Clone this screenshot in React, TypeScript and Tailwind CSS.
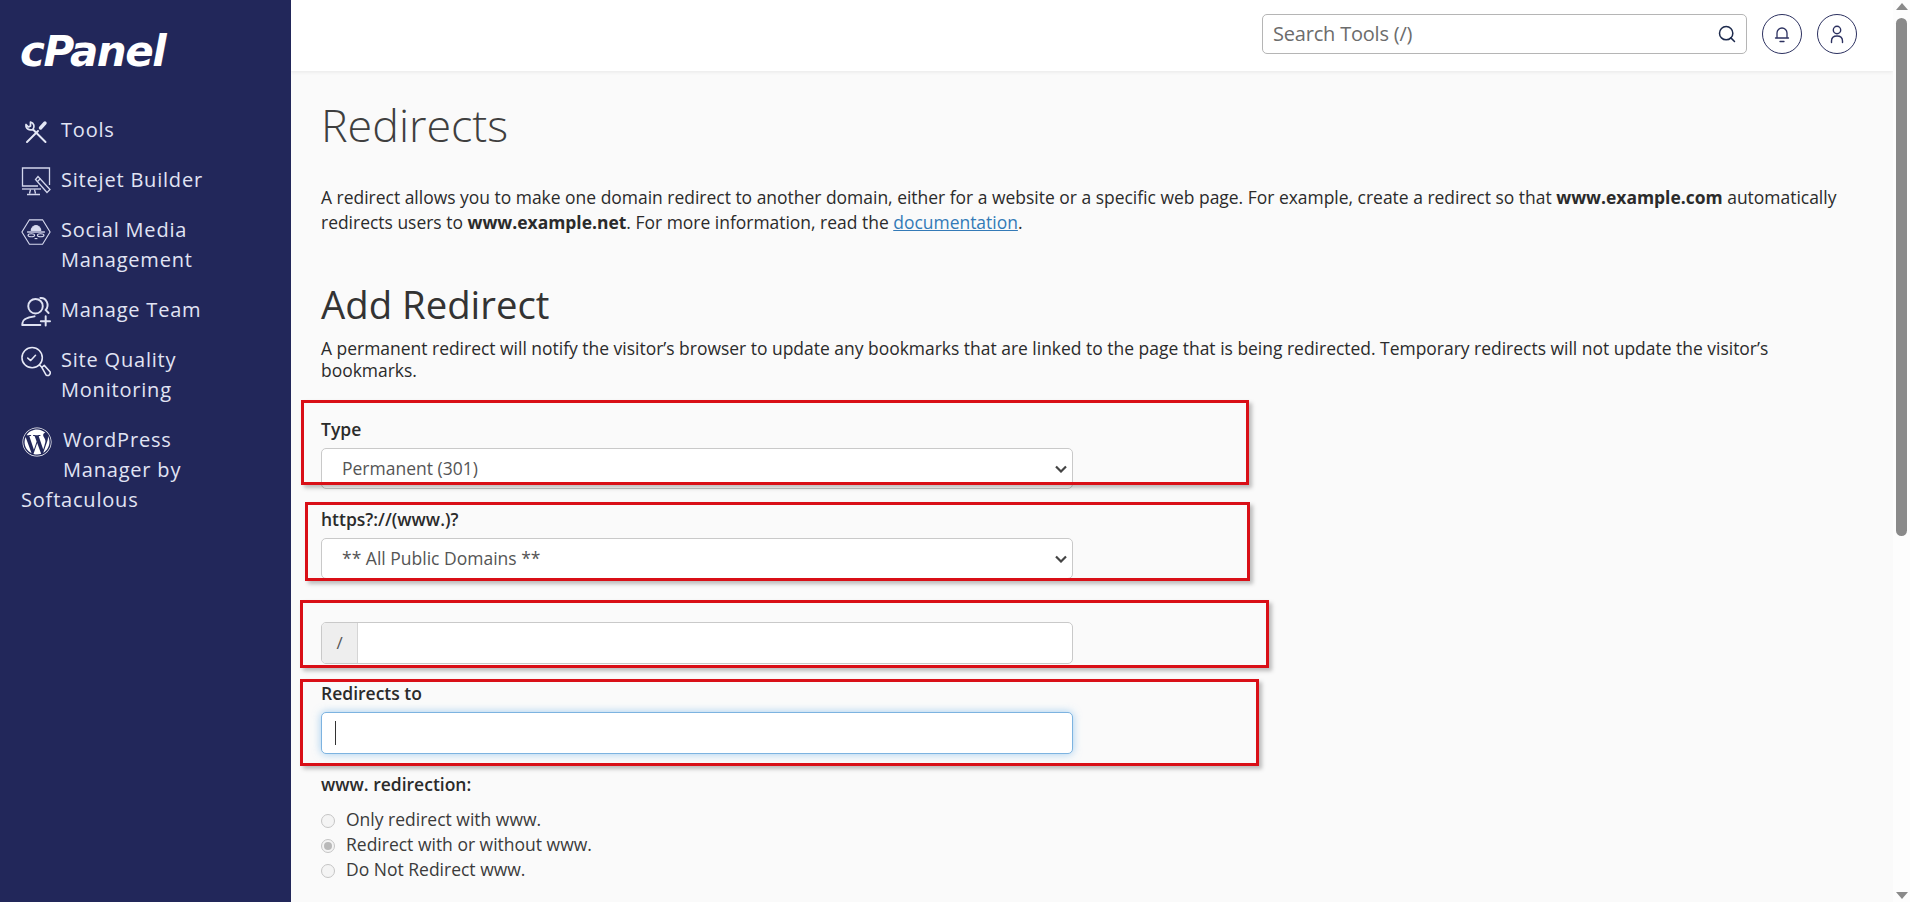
import { Search } from "lucide-react";
import { FaWordpress } from "react-icons/fa";

function ToolsIcon() {
  return (
    <svg viewBox="0 0 24 24" className="h-[24px] w-[24px]" fill="none" stroke="#e4e7f5" strokeLinecap="round">
      <path d="M3 22 14 11" strokeWidth="2" />
      <path d="M16.500 8 21 3" strokeWidth="3.400" />
      <path d="M21.500 22 9 9.500" strokeWidth="2" />
      <path d="M6.500 2v4L4.500 7 2 4.500C1.500 8.500 5 11 9 9.500 11 6.500 10 3 6.500 2z" strokeWidth="1.700" strokeLinejoin="round" />
    </svg>
  );
}

function SitejetIcon() {
  return (
    <svg viewBox="0 0 30 29" className="h-[29px] w-[30px]" fill="none" stroke="#d3d6ec" strokeWidth="1.300">
      <path d="M17 19H1.500V1h27v17" />
      <path d="M1 22h19" />
      <path d="M9.500 22.500l-1 4M13.500 22.500l1 4M6 27.500h13" />
      <path d="M17 9.500l12 13-3 3L14.500 12.500z" fill="#22275a" />
      <path d="M16.500 14.500l3-3" />
    </svg>
  );
}

function SocialIcon() {
  return (
    <svg viewBox="0 0 32 28" className="h-[28px] w-[32px]" fill="none" stroke="#d6d9ee" strokeWidth="1.200">
      <path d="M9 1h14l8 13-8 13H9L1 14z" />
      <path d="M11 13c0-8 10-8 10 0" fill="#d6d9ee" />
      <path d="M6.500 14h19" strokeWidth="1.500" />
      <ellipse cx="11" cy="17.500" rx="3.500" ry="1.600" />
      <ellipse cx="21" cy="17.500" rx="3.500" ry="1.600" />
      <path d="M14.500 21h3" />
    </svg>
  );
}

function TeamIcon() {
  return (
    <svg viewBox="0 0 31 31" className="h-[31px] w-[31px]" fill="none" stroke="#dfe2f2" strokeWidth="2" strokeLinecap="round">
      <circle cx="15" cy="10" r="7.500" />
      <path d="M20 1.500c6-.5 10 7 5.500 12.500l3 3" />
      <path d="M1.500 29.500v-2C1.500 23.500 6 21.500 14 20.500" />
      <path d="M1.500 29.500H20" />
      <path d="M25.500 20.500v9.500M20.500 25.500h9.500" />
    </svg>
  );
}

function QualityIcon() {
  return (
    <svg viewBox="0 0 31 31" className="h-[31px] w-[31px]" fill="none" stroke="#e6e8f6" strokeWidth="1.600" strokeLinecap="round" strokeLinejoin="round">
      <circle cx="11.500" cy="11.500" r="10.500" />
      <path d="M7 12l3 2.500 5-5.500" />
      <path d="M19 19l2.500 2.500" />
      <path d="M21.500 21.500l2.500-2 6 6.500c1 2.500-1.500 5-4 3.500z" />
    </svg>
  );
}

function BellIcon() {
  return (
    <svg viewBox="0 0 16 17" className="h-[17px] w-[16px]" fill="none" stroke="#2c3160" strokeWidth="1.300" strokeLinecap="round">
      <path d="M3 11.500V7a5 5 0 0 1 10 0v4.500" />
      <path d="M1.500 12h13" />
      <path d="M6 15.500h4" />
    </svg>
  );
}

function UserIcon() {
  return (
    <svg viewBox="0 0 14 19" className="h-[19px] w-[14px]" fill="none" stroke="#2c3160" strokeWidth="1.400" strokeLinecap="round">
      <circle cx="7" cy="5" r="3.700" />
      <path d="M1.500 17.500v-1.500C1.500 12.500 4 11 7 11s5.500 1.500 5.500 5v1.500" />
    </svg>
  );
}

function NavItem({ icon, children }: { icon: React.ReactNode; children: React.ReactNode }) {
  return (
    <div className="flex items-start gap-[10px] pl-[21px] text-[20px] leading-[30px] tracking-[0.8px] text-[#e1e4f4]">
      <span className="flex h-[30px] w-[30px] shrink-0 translate-y-[2px] items-center justify-center">{icon}</span>
      <span>{children}</span>
    </div>
  );
}

function Sidebar() {
  return (
    <aside className="w-[291px] shrink-0 bg-[#22275a]">
      <div className="h-[114.500px] pl-[20px] pt-[27px] font-['DejaVu_Sans',sans-serif] text-[42px] leading-[50px] font-bold italic tracking-[-1.500px] text-white">
        cPanel
      </div>
      <nav className="flex flex-col gap-[20px]">
        <NavItem icon={<ToolsIcon />}>Tools</NavItem>
        <NavItem icon={<SitejetIcon />}>Sitejet Builder</NavItem>
        <NavItem icon={<SocialIcon />}>
          Social Media
          <br />
          Management
        </NavItem>
        <NavItem icon={<TeamIcon />}>Manage Team</NavItem>
        <NavItem icon={<QualityIcon />}>
          Site Quality
          <br />
          Monitoring
        </NavItem>
        <div className="pl-[21px] text-[20px] leading-[30px] tracking-[0.8px] text-[#e1e4f4]">
          <div className="flex gap-[11px]">
            <FaWordpress className="ml-[1px] mt-[2px] h-[30px] w-[30px] shrink-0 text-white" />
            <span>
              WordPress
              <br />
              Manager by
            </span>
          </div>
          Softaculous
        </div>
      </nav>
    </aside>
  );
}

function Header() {
  return (
    <header className="flex h-[71px] shrink-0 items-start justify-end gap-[15px] bg-white pr-[36px] pt-[14px] shadow-[0_1px_4px_rgba(0,0,0,0.08)]">
      <div className="flex h-[40px] w-[485px] items-center justify-between rounded-[5px] border border-[#b5b5b5] pl-[10px] pr-[9px]">
        <span className="text-[20px] tracking-[-0.2px] text-[#6c6c6c]">Search Tools (/)</span>
        <Search className="h-[20px] w-[20px] text-[#1d2a4d]" strokeWidth={1.8} />
      </div>
      <span className="flex h-[40px] w-[40px] items-center justify-center rounded-full border border-[#2c3160]">
        <BellIcon />
      </span>
      <span className="flex h-[40px] w-[40px] items-center justify-center rounded-full border border-[#2c3160]">
        <UserIcon />
      </span>
    </header>
  );
}

function ChevronSelect({ value }: { value: string }) {
  return (
    <div className="flex h-[41px] w-[752px] items-center justify-between rounded-[5px] border border-[#c9c9c9] bg-white pl-[20px] pr-[5px] text-[#555]">
      <span className="text-[17.500px]">{value}</span>
      <svg viewBox="0 0 12 8" className="h-[8px] w-[12px]" fill="none" stroke="#444" strokeWidth="2.200">
        <path d="M1 1.500l5 5 5-5" />
      </svg>
    </div>
  );
}

function Radio({ label, checked }: { label: string; checked?: boolean }) {
  return (
    <div className="flex h-[25px] items-center gap-[11px] text-[17.500px] text-[#3b3b3b]">
      <span className="mt-[2px] flex h-[14px] w-[14px] items-center justify-center rounded-full border border-[#c5c5c5] bg-[#f4f4f4]">
        {checked && <span className="h-[8px] w-[8px] rounded-full bg-[#b9b9b9]" />}
      </span>
      {label}
    </div>
  );
}

function RedBox({ className }: { className: string }) {
  return (
    <div className={`pointer-events-none absolute border-[3px] border-[#d90f17] shadow-[3px_3px_4px_rgba(0,0,0,0.25)] ${className}`} />
  );
}

function Form() {
  return (
    <form className="w-[752px] text-[#2b2b2b]">
      <div className="relative">
        <RedBox className="left-[-20px] top-[-16px] h-[85px] w-[948px]" />
        <label className="block h-[26px] text-[17.500px] leading-[26px] font-semibold">Type</label>
        <div className="mt-[6px]">
          <ChevronSelect value="Permanent (301)" />
        </div>
      </div>
      <div className="relative mt-[17px]">
        <RedBox className="left-[-16px] top-[-4px] h-[79px] w-[945px]" />
        <label className="block h-[26px] text-[17.500px] leading-[26px] font-semibold">https?://(www.)?</label>
        <div className="mt-[6px]">
          <ChevronSelect value="** All Public Domains **" />
        </div>
      </div>
      <div className="relative mt-[43px]">
        <RedBox className="left-[-21px] top-[-22px] h-[68px] w-[969px]" />
        <div className="flex h-[42px] items-stretch overflow-hidden rounded-[5px] border border-[#c9c9c9] bg-white">
          <span className="flex w-[36px] items-center justify-center border-r border-[#d5d5d5] bg-[#eeeeee] text-[17px] text-[#555]">/</span>
        </div>
      </div>
      <div className="relative mt-[16px]">
        <RedBox className="left-[-21px] top-[-1px] h-[87px] w-[959px]" />
        <label className="block h-[26px] text-[17.500px] leading-[26px] font-semibold">Redirects to</label>
        <div className="mt-[6px] flex h-[42px] items-center rounded-[5px] border border-[#7db3e0] bg-white pl-[13px] shadow-[0_0_8px_rgba(102,175,233,0.6)]">
          <span className="h-[24px] w-px bg-[#333]" />
        </div>
      </div>
      <div className="mt-[17px] text-[17.500px] leading-[26px] font-semibold">www. redirection:</div>
      <div className="mt-[10px]">
        <Radio label="Only redirect with www." />
        <Radio label="Redirect with or without www." checked />
        <Radio label="Do Not Redirect www." />
      </div>
    </form>
  );
}

function Scrollbar() {
  return (
    <div className="flex w-[17px] shrink-0 flex-col items-center bg-[#fdfdfd] pt-[3px] pb-[3px]">
      <span className="h-0 w-0 border-x-[6px] border-b-[7px] border-x-transparent border-b-[#8a8a8a]" />
      <span className="mt-[8px] h-[518px] w-[11px] rounded-full bg-[#8a8a8a]" />
      <span className="mt-auto h-0 w-0 border-x-[6px] border-t-[7px] border-x-transparent border-t-[#8a8a8a]" />
    </div>
  );
}

export default function App() {
  return (
    <div className="flex h-[902px] overflow-hidden bg-[#fafafa] font-['Open_Sans',sans-serif]">
      <Sidebar />
      <main className="min-w-0 flex-1 overflow-hidden">
        <Header />
        <div className="pl-[30px] pr-[40px]">
          <h1 className="mt-[24px] text-[44.800px] leading-[60px] font-light text-[#3f3f3f]">Redirects</h1>
          <p className="mt-[30px] text-[17.470px] leading-[24.500px] text-[#2b2b2b]">
            A redirect allows you to make one domain redirect to another domain, either for a website or a specific web page. For example, create a redirect so that <b>www.example.com</b> automatically redirects users to <b>www.example.net</b>. For more information, read the <a className="text-[#337ab7] underline">documentation</a>.
          </p>
          <h2 className="mt-[45px] text-[38.300px] leading-[50px] font-medium text-[#333]">Add Redirect</h2>
          <p className="mt-[8px] text-[17.470px] leading-[22px] text-[#2b2b2b]">
            A permanent redirect will notify the visitor’s browser to update any bookmarks that are linked to the page that is being redirected. Temporary redirects will not update the visitor’s bookmarks.
          </p>
          <div className="mt-[35px]">
            <Form />
          </div>
        </div>
      </main>
      <Scrollbar />
    </div>
  );
}
